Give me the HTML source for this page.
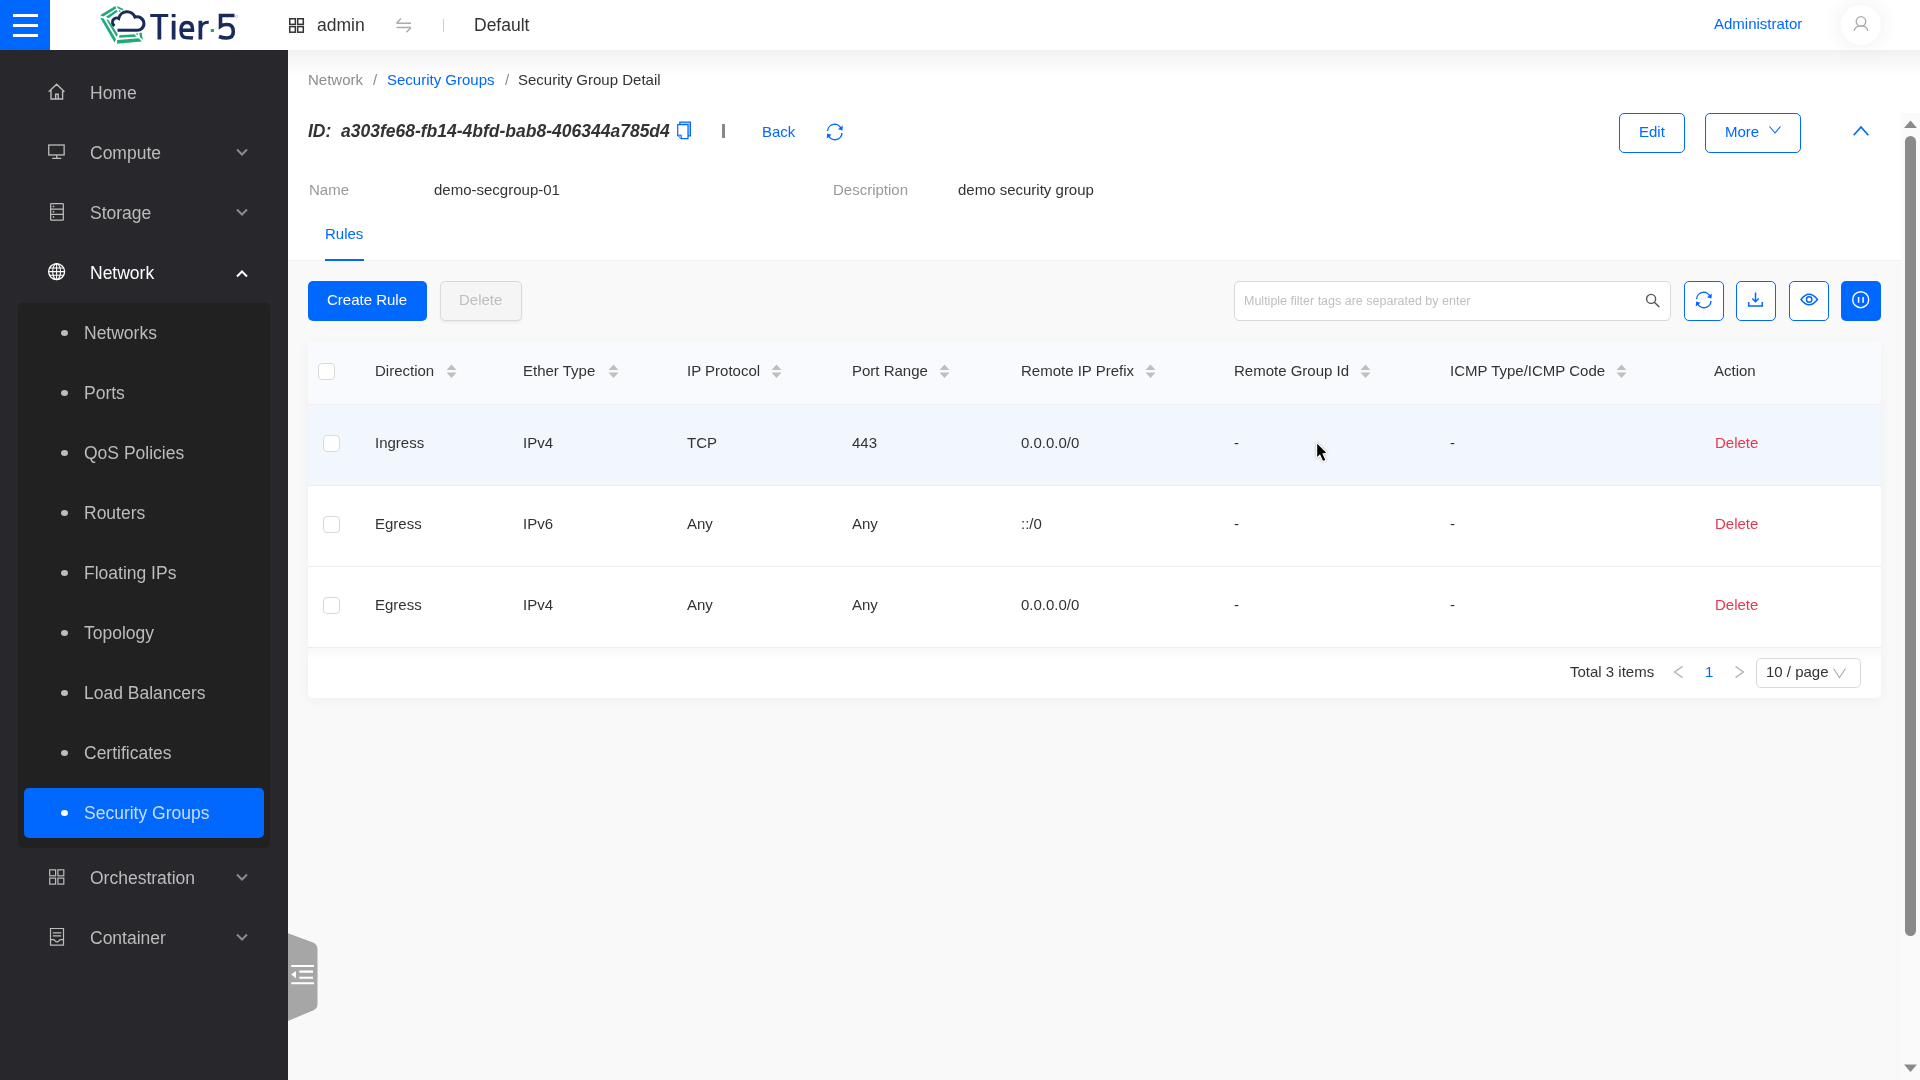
<!DOCTYPE html>
<html><head><meta charset="utf-8">
<style>
*{box-sizing:border-box;margin:0;padding:0}
html,body{width:1920px;height:1080px;overflow:hidden}
body{font-family:"Liberation Sans",sans-serif;background:#f9f9f9;position:relative;color:#333}
.a{position:absolute}
.t{position:absolute;white-space:nowrap;line-height:1;will-change:transform}
svg{position:absolute;overflow:visible}
</style></head><body>
<div class="a" style="left:0px;top:0px;width:1920px;height:50px;background:#fff"></div>
<div class="a" style="left:288px;top:50px;width:1632px;height:211px;background:#fff"></div>
<div class="a" style="left:288px;top:50px;width:1632px;height:26px;background:linear-gradient(rgba(0,0,0,.055),rgba(0,0,0,0))"></div>
<div class="a" style="left:288px;top:260px;width:1613px;height:1px;background:#f0f0f0"></div>
<div class="a" style="left:0px;top:0px;width:50px;height:50px;background:#0068ff"></div>
<div class="a" style="left:13px;top:14px;width:25px;height:3px;background:#fff"></div>
<div class="a" style="left:13px;top:24px;width:25px;height:3px;background:#fff"></div>
<div class="a" style="left:13px;top:34px;width:25px;height:3px;background:#fff"></div>
<svg style="left:96px;top:2px;" width="150" height="46" viewBox="0 0 150 46">
<g fill="#23a878">
<polygon points="4,13.3 19.3,3.9 20.2,6.4 7.3,14.6"/>
<polygon points="10,14.8 20.5,7.8 21.7,9.6 12.5,16.2"/>
<polygon points="21.2,4 27.7,7.3 26.8,8.6 21.6,6.3"/>
<polygon points="22.8,8.2 24.2,8.2 24.8,9.8 23.4,9.9"/>
<polygon points="4.2,15.8 7.7,16.5 20,37.3 18.5,40.6"/>
<polygon points="10.2,17.3 12.7,18.3 21.9,32.5 20.4,34.8"/>
<polygon points="23.3,33.3 38.5,32.3 40.6,34.8 23.1,35.8"/>
<polygon points="21.2,38.1 42.9,36.3 45.8,39.4 21,41.7"/>
<polygon points="43.1,31.25 45.6,30.4 46.9,37.7 44.2,35.4"/>
<polygon points="40.2,31 41.5,30.9 41.9,32.9 40.8,32.9"/>
</g>
<path d="M21.5 28.3 L40.5 28.3 A6.75 6.75 0 1 0 39 15.2 A8.5 8.5 0 0 0 22.7 16.5 A4.1 4.1 0 0 0 18.6 23.8" fill="none" stroke="#1a2a5c" stroke-width="3"/>
<g transform="translate(0,6)"><g fill="#1a2a5c">
<rect x="54.25" y="6" width="18" height="3"/>
<rect x="61.5" y="6" width="3.75" height="25.5"/>
<rect x="75.75" y="6" width="3.75" height="3.25"/>
<rect x="75.75" y="12.75" width="3.75" height="18.75"/>
<rect x="102.5" y="12.75" width="3.75" height="18.75"/>
<path d="M104.5 18 Q106 12.75 112.75 12.75 L112.75 15.75 Q106.5 15.75 106.25 20 Z"/>
</g>
<path d="M97 30 Q94 29.6 90 29.6 Q85 29.6 85 22 Q85 14.5 91 14.5 Q96.5 14.5 96.5 21 L96.5 22.3 L85.5 22.3" fill="none" stroke="#1a2a5c" stroke-width="3.4"/>
<rect x="114.75" y="21" width="3.25" height="3" fill="#23a878"/>
<path d="M138.5 7.5 L124.5 7.5 L124.5 18.3 Q127 16.5 131 16.5 Q137.3 16.5 137.3 23.7 Q137.3 30 130.5 30 Q126.5 30 123 28.5" fill="none" stroke="#1a2a5c" stroke-width="3.6"/>
<circle cx="140.6" cy="8.5" r="1.1" fill="none" stroke="#8891b0" stroke-width=".5"/></g>
</svg>
<svg style="left:289px;top:17.5px;" width="15" height="15" viewBox="0 0 15 15"><rect x="0.75" y="0.75" width="5.6" height="5.6" fill="none" stroke="#333" stroke-width="1.5"/><rect x="0.75" y="8.6" width="5.6" height="5.6" fill="none" stroke="#333" stroke-width="1.5"/><rect x="8.7" y="0.75" width="5.6" height="5.6" fill="none" stroke="#333" stroke-width="1.5"/><rect x="8.7" y="8.6" width="5.6" height="5.6" fill="none" stroke="#333" stroke-width="1.5"/></svg>
<div class="t" style="left:317px;top:17px;font-size:17.5px;color:#333;font-weight:normal;font-style:normal;">admin</div>
<svg style="left:396px;top:18px;" width="16" height="15" viewBox="0 0 16 15"><path d="M0.5 5.2 H15 M0.5 5.2 L5 0.5 M15 9.5 H0.5 M15 9.5 L10.5 14.2" fill="none" stroke="#aaa" stroke-width="1.4"/></svg>
<div class="a" style="left:443px;top:19px;width:1px;height:13px;background:#ccc"></div>
<div class="t" style="left:474px;top:17px;font-size:17.5px;color:#333;font-weight:normal;font-style:normal;">Default</div>
<div class="t" style="left:1714px;top:16px;font-size:15px;color:#0068ff;font-weight:normal;font-style:normal;">Administrator</div>
<div class="a" style="left:1841px;top:5px;width:40px;height:40px;background:#fff;border-radius:50%;box-shadow:0 0 22px rgba(0,0,0,.075)"></div>
<svg style="left:1851px;top:15px;" width="20" height="20" viewBox="0 0 20 20"><circle cx="10" cy="6.5" r="4.8" fill="none" stroke="#aaa" stroke-width="1.3"/><path d="M3.2 16 Q4 10.8 10 10.8 Q16 10.8 16.8 16" fill="none" stroke="#aaa" stroke-width="1.3"/></svg>
<div class="a" style="left:0px;top:50px;width:288px;height:1030px;background:#28272c"></div>
<div class="a" style="left:18px;top:303px;width:252px;height:545px;background:#212121;border-radius:5px"></div>
<div class="a" style="left:24px;top:788px;width:240px;height:50px;background:#0068ff;border-radius:5px"></div>
<div class="t" style="left:90px;top:85px;font-size:17.5px;color:#bcbcbc;font-weight:normal;font-style:normal;">Home</div>
<div class="t" style="left:90px;top:145px;font-size:17.5px;color:#bcbcbc;font-weight:normal;font-style:normal;">Compute</div>
<div class="t" style="left:90px;top:205px;font-size:17.5px;color:#bcbcbc;font-weight:normal;font-style:normal;">Storage</div>
<div class="t" style="left:90px;top:265px;font-size:17.5px;color:#fff;font-weight:normal;font-style:normal;">Network</div>
<div class="a" style="left:61px;top:330px;width:7px;height:6px;background:#bcbcbc;border-radius:50%"></div>
<div class="t" style="left:84px;top:325px;font-size:17.5px;color:#bcbcbc;font-weight:normal;font-style:normal;">Networks</div>
<div class="a" style="left:61px;top:390px;width:7px;height:6px;background:#bcbcbc;border-radius:50%"></div>
<div class="t" style="left:84px;top:385px;font-size:17.5px;color:#bcbcbc;font-weight:normal;font-style:normal;">Ports</div>
<div class="a" style="left:61px;top:450px;width:7px;height:6px;background:#bcbcbc;border-radius:50%"></div>
<div class="t" style="left:84px;top:445px;font-size:17.5px;color:#bcbcbc;font-weight:normal;font-style:normal;">QoS Policies</div>
<div class="a" style="left:61px;top:510px;width:7px;height:6px;background:#bcbcbc;border-radius:50%"></div>
<div class="t" style="left:84px;top:505px;font-size:17.5px;color:#bcbcbc;font-weight:normal;font-style:normal;">Routers</div>
<div class="a" style="left:61px;top:570px;width:7px;height:6px;background:#bcbcbc;border-radius:50%"></div>
<div class="t" style="left:84px;top:565px;font-size:17.5px;color:#bcbcbc;font-weight:normal;font-style:normal;">Floating IPs</div>
<div class="a" style="left:61px;top:630px;width:7px;height:6px;background:#bcbcbc;border-radius:50%"></div>
<div class="t" style="left:84px;top:625px;font-size:17.5px;color:#bcbcbc;font-weight:normal;font-style:normal;">Topology</div>
<div class="a" style="left:61px;top:690px;width:7px;height:6px;background:#bcbcbc;border-radius:50%"></div>
<div class="t" style="left:84px;top:685px;font-size:17.5px;color:#bcbcbc;font-weight:normal;font-style:normal;">Load Balancers</div>
<div class="a" style="left:61px;top:750px;width:7px;height:6px;background:#bcbcbc;border-radius:50%"></div>
<div class="t" style="left:84px;top:745px;font-size:17.5px;color:#bcbcbc;font-weight:normal;font-style:normal;">Certificates</div>
<div class="a" style="left:61px;top:810px;width:7px;height:6px;background:#fff;border-radius:50%"></div>
<div class="t" style="left:84px;top:805px;font-size:17.5px;color:#c9dcff;font-weight:normal;font-style:normal;">Security Groups</div>
<div class="t" style="left:90px;top:870px;font-size:17.5px;color:#bcbcbc;font-weight:normal;font-style:normal;">Orchestration</div>
<div class="t" style="left:90px;top:930px;font-size:17.5px;color:#bcbcbc;font-weight:normal;font-style:normal;">Container</div>
<svg style="left:236px;top:148px;" width="12" height="8" viewBox="0 0 12 8"><path d="M1 1.5 L6 6.5 L11 1.5" fill="none" stroke="#8c8c8c" stroke-width="2"/></svg>
<svg style="left:236px;top:208px;" width="12" height="8" viewBox="0 0 12 8"><path d="M1 1.5 L6 6.5 L11 1.5" fill="none" stroke="#8c8c8c" stroke-width="2"/></svg>
<svg style="left:236px;top:270px;" width="12" height="8" viewBox="0 0 12 8"><path d="M1 6.5 L6 1.5 L11 6.5" fill="none" stroke="#fff" stroke-width="2"/></svg>
<svg style="left:236px;top:873px;" width="12" height="8" viewBox="0 0 12 8"><path d="M1 1.5 L6 6.5 L11 1.5" fill="none" stroke="#8c8c8c" stroke-width="2"/></svg>
<svg style="left:236px;top:933px;" width="12" height="8" viewBox="0 0 12 8"><path d="M1 1.5 L6 6.5 L11 1.5" fill="none" stroke="#8c8c8c" stroke-width="2"/></svg>
<svg style="left:47px;top:83px;" width="19" height="18" viewBox="0 0 19 18"><path d="M1.7 8.8 L9.65 1.2 L17.4 8.8 M4 6.8 V16 H15.6 V6.8 M8.6 16 V11.2 H11.2 V16" fill="none" stroke="#bcbcbc" stroke-width="1.4"/></svg>
<svg style="left:47px;top:144px;" width="19" height="16" viewBox="0 0 19 16"><rect x="1.75" y="1" width="15.4" height="9.95" fill="none" stroke="#bcbcbc" stroke-width="1.3"/><path d="M9.75 11 V14.3 M5.2 14.35 H14.3" fill="none" stroke="#bcbcbc" stroke-width="1.3"/></svg>
<svg style="left:49px;top:202px;" width="16" height="20" viewBox="0 0 16 20"><rect x="1.65" y="1.65" width="12.65" height="16.55" rx=".6" fill="none" stroke="#bcbcbc" stroke-width="1.25"/><path d="M1.6 7.1 H14.3 M1.6 12.3 H14.3" stroke="#bcbcbc" stroke-width="1.2"/><circle cx="4.5" cy="4.4" r=".85" fill="#bcbcbc"/><circle cx="4.5" cy="9.7" r=".85" fill="#bcbcbc"/><circle cx="4.5" cy="14.9" r=".85" fill="#bcbcbc"/></svg>
<svg style="left:47px;top:262px;" width="20" height="20" viewBox="0 0 20 20"><circle cx="9.6" cy="9.6" r="8" fill="none" stroke="#fff" stroke-width="1.3"/><ellipse cx="9.6" cy="9.6" rx="3.9" ry="8" fill="none" stroke="#fff" stroke-width="1.1"/><path d="M9.6 1.6 V17.6 M1.6 9.6 H17.6 M2.6 5.9 H16.6 M2.6 13.3 H16.6" stroke="#fff" stroke-width="1.05"/></svg>
<svg style="left:49px;top:868.5px;" width="16" height="17" viewBox="0 0 16 17"><rect x="0.7" y="0.8" width="5.9" height="6" fill="none" stroke="#bcbcbc" stroke-width="1.2"/><rect x="0.7" y="9.1" width="5.9" height="6" fill="none" stroke="#bcbcbc" stroke-width="1.2"/><rect x="8.9" y="0.8" width="5.9" height="6" fill="none" stroke="#bcbcbc" stroke-width="1.2"/><rect x="8.9" y="9.1" width="5.9" height="6" fill="none" stroke="#bcbcbc" stroke-width="1.2"/></svg>
<svg style="left:49px;top:927px;" width="16" height="20" viewBox="0 0 16 20"><path d="M1.5 1.5 H14.5 V18.2 H1.5 Z" fill="none" stroke="#bcbcbc" stroke-width="1.2"/><path d="M3.8 5.9 H12.2 M3.8 8.8 H12.2" stroke="#bcbcbc" stroke-width="1.2"/><path d="M1.5 12.6 H4.3 Q5.3 12.6 5.9 13.6 Q8 16.3 10.1 13.6 Q10.7 12.6 11.7 12.6 H14.5" fill="none" stroke="#bcbcbc" stroke-width="1.2"/></svg>
<svg style="left:288px;top:933px;" width="31" height="88" viewBox="0 0 31 88"><path d="M0 0.3 L25 9.5 Q29.5 11.5 29.5 16 V71 Q29.5 75.5 25 77.5 L0 88 Z" fill="#a6a6a6"/><path d="M3.2 33 H26 M11.3 38.6 H25 M11.3 44.7 H25 M3.2 50.3 H26" stroke="#fff" stroke-width="2.1"/><path d="M3.2 41.6 L8 37.9 V45.3 Z" fill="#fff"/></svg>
<div class="t" style="left:308px;top:72px;font-size:15px;color:#8c8c8c;font-weight:normal;font-style:normal;">Network</div>
<div class="t" style="left:373px;top:72px;font-size:15px;color:#8c8c8c;font-weight:normal;font-style:normal;">/</div>
<div class="t" style="left:387px;top:72px;font-size:15px;color:#0068ff;font-weight:normal;font-style:normal;">Security Groups</div>
<div class="t" style="left:505px;top:72px;font-size:15px;color:#8c8c8c;font-weight:normal;font-style:normal;">/</div>
<div class="t" style="left:518px;top:72px;font-size:15px;color:#333;font-weight:normal;font-style:normal;">Security Group Detail</div>
<div class="t" style="left:308px;top:123px;font-size:17.5px;color:#333;font-weight:bold;font-style:italic;">ID:</div>
<div class="t" style="left:341px;top:123px;font-size:17.5px;color:#333;font-weight:bold;font-style:italic;">a303fe68-fb14-4bfd-bab8-406344a785d4</div>
<svg style="left:677px;top:120.6px;" width="15" height="19" viewBox="0 0 15 19"><path d="M2.8 3.6 V1.2 H13.4 V14.8 H11" fill="#b3d1ff" stroke="#0068ff" stroke-width="1.2"/><path d="M0.7 3.6 H11 V17.6 H4.3 L0.7 14.2 Z" fill="#fff" stroke="#0068ff" stroke-width="1.2"/><path d="M0.7 14.2 H4.3 V17.6" fill="#b3d1ff" stroke="#0068ff" stroke-width="1"/></svg>
<div class="a" style="left:722px;top:124px;width:3px;height:14px;background:#888"></div>
<div class="t" style="left:762px;top:124px;font-size:15px;color:#0068ff;font-weight:normal;font-style:normal;">Back</div>
<svg style="left:825px;top:122px;" width="20" height="20" viewBox="0 0 20 20"><path d="M2.6 9 A7 7 0 0 1 16.2 7 M17 11 A7 7 0 0 1 3.4 13" fill="none" stroke="#0068ff" stroke-width="1.4"/><path d="M17.8 3.5 L17.5 8.5 L13 7.2 Z M1.8 16.5 L2.1 11.5 L6.6 12.8 Z" fill="#0068ff"/></svg>
<div class="a" style="left:1619px;top:113px;width:66px;height:40px;border:1px solid #0068ff;border-radius:5px;background:#fff"></div>
<div class="t" style="left:1639px;top:124px;font-size:15px;color:#0068ff;font-weight:normal;font-style:normal;">Edit</div>
<div class="a" style="left:1705px;top:113px;width:96px;height:40px;border:1px solid #0068ff;border-radius:5px;background:#fff"></div>
<div class="t" style="left:1725px;top:124px;font-size:15px;color:#0068ff;font-weight:normal;font-style:normal;">More</div>
<svg style="left:1769px;top:126px;" width="12" height="8" viewBox="0 0 12 8"><path d="M0.5 0.5 L6 7 L11.5 0.5" fill="none" stroke="#0068ff" stroke-width="1.1"/></svg>
<svg style="left:1853px;top:126px;" width="16" height="10" viewBox="0 0 16 10"><path d="M0.7 9.3 L8 1 L15.3 9.3" fill="none" stroke="#0068ff" stroke-width="1.7"/></svg>
<div class="t" style="left:309px;top:182px;font-size:15px;color:#999;font-weight:normal;font-style:normal;">Name</div>
<div class="t" style="left:434px;top:182px;font-size:15px;color:#333;font-weight:normal;font-style:normal;">demo-secgroup-01</div>
<div class="t" style="left:833px;top:182px;font-size:15px;color:#999;font-weight:normal;font-style:normal;">Description</div>
<div class="t" style="left:958px;top:182px;font-size:15px;color:#333;font-weight:normal;font-style:normal;">demo security group</div>
<div class="t" style="left:325px;top:226px;font-size:15px;color:#0068ff;font-weight:normal;font-style:normal;">Rules</div>
<div class="a" style="left:325px;top:259px;width:39px;height:2px;background:#0068ff"></div>
<div class="a" style="left:308px;top:281px;width:119px;height:40px;background:#0068ff;border-radius:5px"></div>
<div class="t" style="left:327px;top:292px;font-size:15px;color:#fff;font-weight:normal;font-style:normal;">Create Rule</div>
<div class="a" style="left:440px;top:281px;width:82px;height:40px;background:#f5f5f5;border:1px solid #d9d9d9;border-radius:5px;box-shadow:0 2px 3px rgba(0,0,0,.05)"></div>
<div class="t" style="left:459px;top:292px;font-size:15px;color:#bfbfbf;font-weight:normal;font-style:normal;">Delete</div>
<div class="a" style="left:1234px;top:281px;width:437px;height:40px;background:#fff;border:1px solid #d9d9d9;border-radius:5px"></div>
<div class="t" style="left:1244px;top:295px;font-size:12.5px;color:#bfbfbf;font-weight:normal;font-style:normal;">Multiple filter tags are separated by enter</div>
<svg style="left:1644px;top:293px;" width="17" height="17" viewBox="0 0 17 17"><circle cx="7.1" cy="5.9" r="4.5" fill="none" stroke="#555" stroke-width="1.4"/><path d="M10.4 9.3 L15.3 14" stroke="#555" stroke-width="1.5"/></svg>
<div class="a" style="left:1684px;top:281px;width:40px;height:40px;border:1px solid #0068ff;border-radius:5px;background:#fff"></div>
<div class="a" style="left:1736px;top:281px;width:40px;height:40px;border:1px solid #0068ff;border-radius:5px;background:#fff"></div>
<div class="a" style="left:1789px;top:281px;width:40px;height:40px;border:1px solid #0068ff;border-radius:5px;background:#fff"></div>
<div class="a" style="left:1841px;top:281px;width:40px;height:40px;background:#0068ff;border-radius:5px"></div>
<svg style="left:1694px;top:290px;" width="20" height="20" viewBox="0 0 20 20"><path d="M2.6 9 A7 7 0 0 1 16.2 7 M17 11 A7 7 0 0 1 3.4 13" fill="none" stroke="#0068ff" stroke-width="1.4"/><path d="M17.8 3.5 L17.5 8.5 L13 7.2 Z M1.8 16.5 L2.1 11.5 L6.6 12.8 Z" fill="#0068ff"/></svg>
<svg style="left:1746px;top:291px;" width="20" height="20" viewBox="0 0 20 20"><path d="M9.5 1.5 V10.5 M6.3 7.5 L9.5 10.7 L12.7 7.5 M2.7 11 V15 H16.3 V11" fill="none" stroke="#0068ff" stroke-width="1.5"/></svg>
<svg style="left:1799.5px;top:291px;" width="20" height="20" viewBox="0 0 20 20"><path d="M1 8.5 Q9 -2 17.5 8.5 Q9 19 1 8.5 Z" fill="none" stroke="#0068ff" stroke-width="1.5"/><circle cx="9.2" cy="8.5" r="2.7" fill="none" stroke="#0068ff" stroke-width="1.5"/></svg>
<svg style="left:1851px;top:290px;" width="20" height="20" viewBox="0 0 20 20"><circle cx="9.7" cy="9.7" r="8" fill="none" stroke="#fff" stroke-width="1.4"/><path d="M7.6 7 V12.8 M12.1 7 V12.8" stroke="#fff" stroke-width="1.5"/></svg>
<div class="a" style="left:308px;top:341px;width:1573px;height:357px;background:#fff;border-radius:5px;box-shadow:0 3px 14px rgba(0,0,0,.045)"></div>
<div class="a" style="left:308px;top:341px;width:1573px;height:63px;background:#f9fafd;border-radius:5px 5px 0 0"></div>
<div class="a" style="left:308px;top:404px;width:1573px;height:1px;background:#f0f0f0"></div>
<div class="a" style="left:308px;top:405px;width:1573px;height:80px;background:#f2f6fd"></div>
<div class="a" style="left:308px;top:485px;width:1573px;height:1px;background:#ededed"></div>
<div class="a" style="left:308px;top:566px;width:1573px;height:1px;background:#ededed"></div>
<div class="a" style="left:308px;top:647px;width:1573px;height:1px;background:#ededed"></div>
<div class="a" style="left:308px;top:648px;width:1573px;height:11px;background:linear-gradient(rgba(0,0,0,.03),rgba(0,0,0,0))"></div>
<div class="a" style="left:318px;top:363px;width:17px;height:17px;border:1px solid #d9d9d9;border-radius:4px;background:#fff"></div>
<div class="a" style="left:323px;top:435px;width:17px;height:17px;border:1px solid #d9d9d9;border-radius:4px;background:#fff"></div>
<div class="a" style="left:323px;top:516px;width:17px;height:17px;border:1px solid #d9d9d9;border-radius:4px;background:#fff"></div>
<div class="a" style="left:323px;top:597px;width:17px;height:17px;border:1px solid #d9d9d9;border-radius:4px;background:#fff"></div>
<div class="t" style="left:375px;top:363px;font-size:15px;color:#333;font-weight:normal;font-style:normal;">Direction</div>
<svg style="left:446px;top:364px;" width="11" height="15" viewBox="0 0 11 15"><path d="M5.5 0.5 L10.5 6 H0.5 Z M0.5 8.5 H10.5 L5.5 14 Z" fill="#bfbfbf"/></svg>
<div class="t" style="left:523px;top:363px;font-size:15px;color:#333;font-weight:normal;font-style:normal;">Ether Type</div>
<svg style="left:608px;top:364px;" width="11" height="15" viewBox="0 0 11 15"><path d="M5.5 0.5 L10.5 6 H0.5 Z M0.5 8.5 H10.5 L5.5 14 Z" fill="#bfbfbf"/></svg>
<div class="t" style="left:687px;top:363px;font-size:15px;color:#333;font-weight:normal;font-style:normal;">IP Protocol</div>
<svg style="left:771px;top:364px;" width="11" height="15" viewBox="0 0 11 15"><path d="M5.5 0.5 L10.5 6 H0.5 Z M0.5 8.5 H10.5 L5.5 14 Z" fill="#bfbfbf"/></svg>
<div class="t" style="left:852px;top:363px;font-size:15px;color:#333;font-weight:normal;font-style:normal;">Port Range</div>
<svg style="left:939px;top:364px;" width="11" height="15" viewBox="0 0 11 15"><path d="M5.5 0.5 L10.5 6 H0.5 Z M0.5 8.5 H10.5 L5.5 14 Z" fill="#bfbfbf"/></svg>
<div class="t" style="left:1021px;top:363px;font-size:15px;color:#333;font-weight:normal;font-style:normal;">Remote IP Prefix</div>
<svg style="left:1145px;top:364px;" width="11" height="15" viewBox="0 0 11 15"><path d="M5.5 0.5 L10.5 6 H0.5 Z M0.5 8.5 H10.5 L5.5 14 Z" fill="#bfbfbf"/></svg>
<div class="t" style="left:1234px;top:363px;font-size:15px;color:#333;font-weight:normal;font-style:normal;">Remote Group Id</div>
<svg style="left:1360px;top:364px;" width="11" height="15" viewBox="0 0 11 15"><path d="M5.5 0.5 L10.5 6 H0.5 Z M0.5 8.5 H10.5 L5.5 14 Z" fill="#bfbfbf"/></svg>
<div class="t" style="left:1449.5px;top:363px;font-size:15px;color:#333;font-weight:normal;font-style:normal;">ICMP Type/ICMP Code</div>
<svg style="left:1616px;top:364px;" width="11" height="15" viewBox="0 0 11 15"><path d="M5.5 0.5 L10.5 6 H0.5 Z M0.5 8.5 H10.5 L5.5 14 Z" fill="#bfbfbf"/></svg>
<div class="t" style="left:1713.5px;top:363px;font-size:15px;color:#333;font-weight:normal;font-style:normal;">Action</div>
<div class="t" style="left:375px;top:435px;font-size:15px;color:#333;font-weight:normal;font-style:normal;">Ingress</div>
<div class="t" style="left:523px;top:435px;font-size:15px;color:#333;font-weight:normal;font-style:normal;">IPv4</div>
<div class="t" style="left:687px;top:435px;font-size:15px;color:#333;font-weight:normal;font-style:normal;">TCP</div>
<div class="t" style="left:852px;top:435px;font-size:15px;color:#333;font-weight:normal;font-style:normal;">443</div>
<div class="t" style="left:1021px;top:435px;font-size:15px;color:#333;font-weight:normal;font-style:normal;">0.0.0.0/0</div>
<div class="t" style="left:1234px;top:435px;font-size:15px;color:#333;font-weight:normal;font-style:normal;">-</div>
<div class="t" style="left:1449.5px;top:435px;font-size:15px;color:#333;font-weight:normal;font-style:normal;">-</div>
<div class="t" style="left:1714.5px;top:435px;font-size:15px;color:#e8364f;font-weight:normal;font-style:normal;">Delete</div>
<div class="t" style="left:375px;top:516px;font-size:15px;color:#333;font-weight:normal;font-style:normal;">Egress</div>
<div class="t" style="left:523px;top:516px;font-size:15px;color:#333;font-weight:normal;font-style:normal;">IPv6</div>
<div class="t" style="left:687px;top:516px;font-size:15px;color:#333;font-weight:normal;font-style:normal;">Any</div>
<div class="t" style="left:852px;top:516px;font-size:15px;color:#333;font-weight:normal;font-style:normal;">Any</div>
<div class="t" style="left:1021px;top:516px;font-size:15px;color:#333;font-weight:normal;font-style:normal;">::/0</div>
<div class="t" style="left:1234px;top:516px;font-size:15px;color:#333;font-weight:normal;font-style:normal;">-</div>
<div class="t" style="left:1449.5px;top:516px;font-size:15px;color:#333;font-weight:normal;font-style:normal;">-</div>
<div class="t" style="left:1714.5px;top:516px;font-size:15px;color:#e8364f;font-weight:normal;font-style:normal;">Delete</div>
<div class="t" style="left:375px;top:597px;font-size:15px;color:#333;font-weight:normal;font-style:normal;">Egress</div>
<div class="t" style="left:523px;top:597px;font-size:15px;color:#333;font-weight:normal;font-style:normal;">IPv4</div>
<div class="t" style="left:687px;top:597px;font-size:15px;color:#333;font-weight:normal;font-style:normal;">Any</div>
<div class="t" style="left:852px;top:597px;font-size:15px;color:#333;font-weight:normal;font-style:normal;">Any</div>
<div class="t" style="left:1021px;top:597px;font-size:15px;color:#333;font-weight:normal;font-style:normal;">0.0.0.0/0</div>
<div class="t" style="left:1234px;top:597px;font-size:15px;color:#333;font-weight:normal;font-style:normal;">-</div>
<div class="t" style="left:1449.5px;top:597px;font-size:15px;color:#333;font-weight:normal;font-style:normal;">-</div>
<div class="t" style="left:1714.5px;top:597px;font-size:15px;color:#e8364f;font-weight:normal;font-style:normal;">Delete</div>
<div class="t" style="left:1570px;top:664px;font-size:15px;color:#333;font-weight:normal;font-style:normal;">Total 3 items</div>
<svg style="left:1673px;top:666px;" width="11" height="12" viewBox="0 0 11 12"><path d="M9.5 0.5 L1.5 6 L9.5 11.5" fill="none" stroke="#aaa" stroke-width="1.2"/></svg>
<div class="t" style="left:1705px;top:664px;font-size:15px;color:#0068ff;font-weight:normal;font-style:normal;">1</div>
<svg style="left:1734px;top:666px;" width="11" height="12" viewBox="0 0 11 12"><path d="M1.5 0.5 L9.5 6 L1.5 11.5" fill="none" stroke="#aaa" stroke-width="1.2"/></svg>
<div class="a" style="left:1756px;top:658px;width:105px;height:30px;border:1px solid #d9d9d9;border-radius:5px;background:#fff"></div>
<div class="t" style="left:1766px;top:664px;font-size:15px;color:#333;font-weight:normal;font-style:normal;">10 / page</div>
<svg style="left:1833px;top:668px;" width="13" height="10" viewBox="0 0 13 10"><path d="M0.5 0.5 L6.5 9.5 L12.5 0.5" fill="none" stroke="#aaa" stroke-width="1.1"/></svg>
<div class="a" style="left:1901px;top:113px;width:19px;height:967px;background:#fafafa"></div>
<svg style="left:1903px;top:120px;" width="15" height="9" viewBox="0 0 15 9"><path d="M7.5 0.5 L14 8 H1 Z" fill="#8a8a8a"/></svg>
<div class="a" style="left:1905px;top:136px;width:11px;height:799.5px;background:#8a8a8a;border-radius:6px"></div>
<svg style="left:1903px;top:1064px;" width="15" height="9" viewBox="0 0 15 9"><path d="M1 0.5 H14 L7.5 8 Z" fill="#8a8a8a"/></svg>
<svg style="left:1315px;top:442px;filter:drop-shadow(0.5px 0.8px 0.8px rgba(0,0,0,.3))" width="16" height="22" viewBox="0 0 16 22"><path d="M2.2 1.7 L2.2 14.9 L5 12.3 L8 18.8 L10.3 18 L7.3 11.6 L11.2 10.7 Z" fill="#fff" stroke="#fff" stroke-width="2.2" stroke-linejoin="round"/><path d="M2.2 1.7 L2.2 14.9 L5 12.3 L8 18.8 L10.3 18 L7.3 11.6 L11.2 10.7 Z" fill="#000"/></svg>
</body></html>
